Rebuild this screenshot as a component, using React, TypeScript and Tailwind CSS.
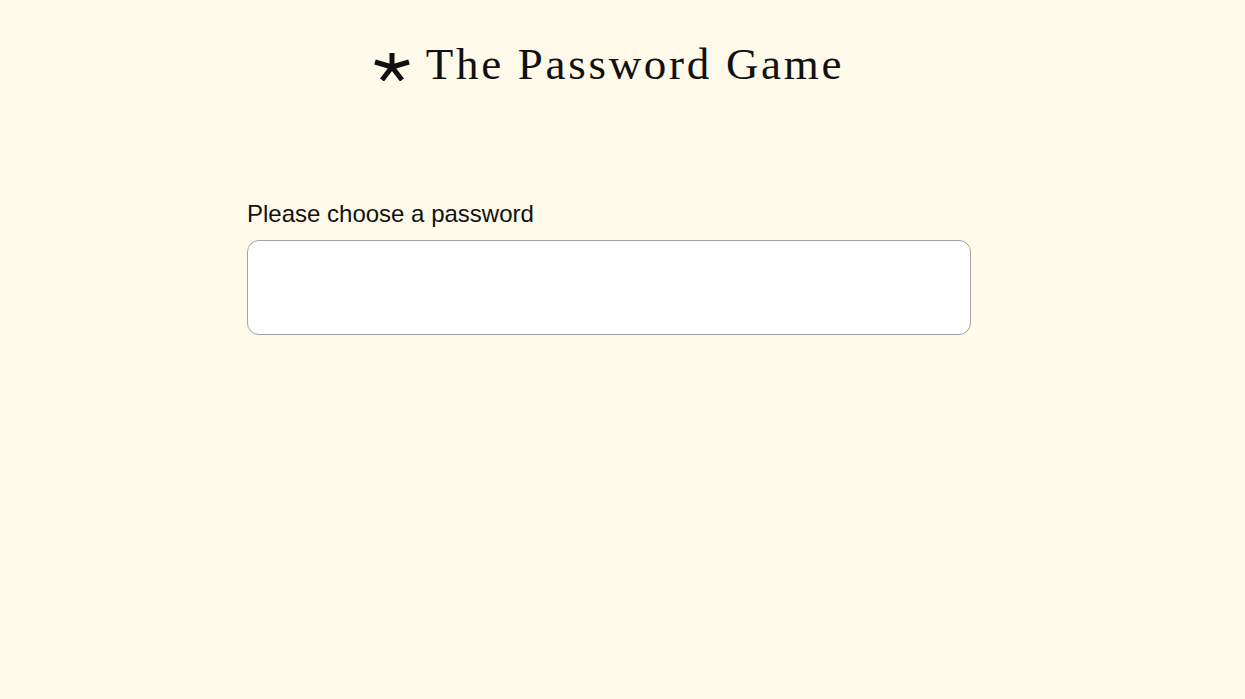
function Asterisk() {
  return (
    <svg width="36" height="28" viewBox="0 0 36 28" className="shrink-0 translate-y-[3px]">
      <g stroke="#111" strokeWidth="5" strokeLinecap="butt">
        <line x1="18" y1="14" x2="18" y2="0" />
        <line x1="18" y1="14" x2="35" y2="9" />
        <line x1="18" y1="14" x2="1" y2="9" />
        <line x1="18" y1="14" x2="28" y2="27" />
        <line x1="18" y1="14" x2="8" y2="27" />
      </g>
    </svg>
  );
}

export default function App() {
  return (
    <div className="min-h-[699px] w-full bg-[#fffaea] pr-[27px]">
      <div className="mx-auto flex w-[724px] flex-col">
        <h1 className="mt-[36px] flex items-center justify-center gap-[16px] font-['Liberation_Serif',serif] text-[45px] leading-[56px] tracking-[2.7px] text-[#111]">
          <Asterisk />
          <span>The Password Game</span>
        </h1>
        <label className="mt-[108px] font-['Liberation_Sans',Arial,sans-serif] text-[24px] leading-[28px] text-[#111]">
          Please choose a password
        </label>
        <div className="mt-[12px] h-[95px] w-full rounded-[12px] border border-[#a3a3a3] bg-white" />
      </div>
    </div>
  );
}
